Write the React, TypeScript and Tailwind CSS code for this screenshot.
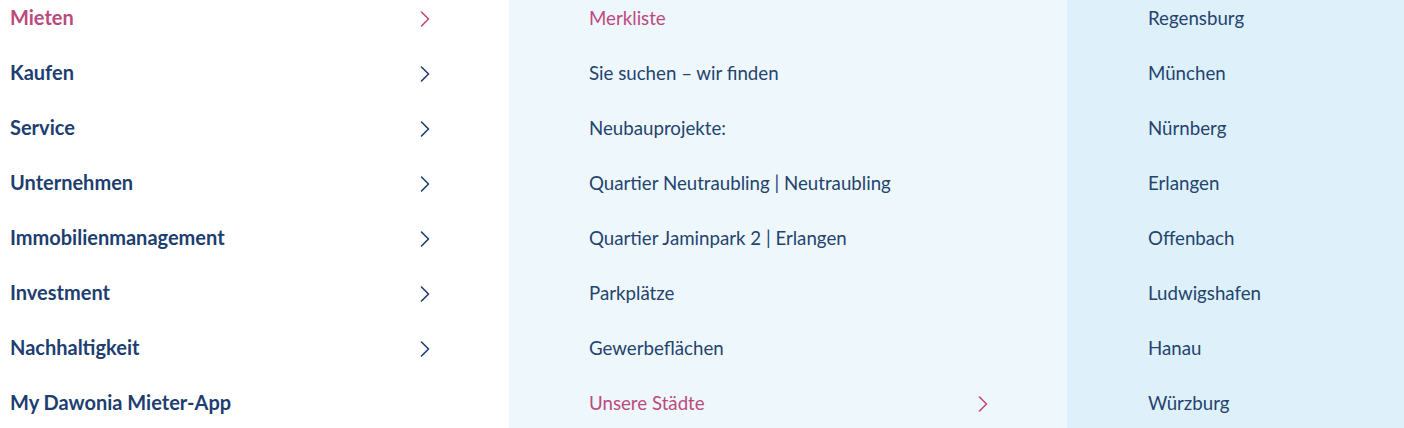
import React from "react";

const navy = "text-[#1d3e70]";
const navyLight = "text-[#24446f]";
const pink = "text-[#bc4a7e]";

function Chevron({ color }: { color: string }) {
  return (
    <svg width="10" height="16" viewBox="0 0 10 16" className={color} fill="none">
      <path d="M1.5 1 L8.5 8 L1.5 15" stroke="currentColor" strokeWidth="1.6" strokeLinecap="round" strokeLinejoin="round" />
    </svg>
  );
}

const left = [
  { t: "Mieten", active: true, chev: true },
  { t: "Kaufen", chev: true },
  { t: "Service", chev: true },
  { t: "Unternehmen", chev: true },
  { t: "Immobilienmanagement", chev: true },
  { t: "Investment", chev: true },
  { t: "Nachhaltigkeit", chev: true },
  { t: "My Dawonia Mieter-App", chev: false },
];

const mid = [
  { t: "Merkliste", pink: true },
  { t: "Sie suchen – wir finden" },
  { t: "Neubauprojekte:" },
  { t: "Quartier Neutraubling | Neutraubling" },
  { t: "Quartier Jaminpark 2 | Erlangen" },
  { t: "Parkplätze" },
  { t: "Gewerbeflächen" },
  { t: "Unsere Städte", pink: true, chev: true },
];

const right = ["Regensburg", "München", "Nürnberg", "Erlangen", "Offenbach", "Ludwigshafen", "Hanau", "Würzburg"];

export default function App() {
  return (
    <div className="w-[1404px] h-[428px] overflow-hidden bg-white font-['Lato',sans-serif]">
      <div className="flex mt-[-9px]">
        <div className="w-[509px] flex flex-col">
          {left.map((r) => (
            <div key={r.t} className="h-[55px] flex items-center pl-[10px] pr-[79px] justify-between">
              <span className={`text-[20px] leading-[28px] mb-[3px] font-bold ${r.active ? pink : navy}`}>{r.t}</span>
              {r.chev && <Chevron color={r.active ? pink : navy} />}
            </div>
          ))}
        </div>
        <div className="w-[558px] bg-[#eef7fb] flex flex-col">
          {mid.map((r) => (
            <div key={r.t} className="h-[55px] flex items-center pl-[80px] pr-[79px] justify-between">
              <span className={`text-[18.7px] ${r.pink ? pink : navyLight}`}>{r.t}</span>
              {r.chev && <Chevron color={pink} />}
            </div>
          ))}
        </div>
        <div className="flex-1 bg-[#def0f9] flex flex-col">
          {right.map((t) => (
            <div key={t} className="h-[55px] flex items-center pl-[81px]">
              <span className={`text-[18.7px] ${navyLight}`}>{t}</span>
            </div>
          ))}
        </div>
      </div>
    </div>
  );
}
